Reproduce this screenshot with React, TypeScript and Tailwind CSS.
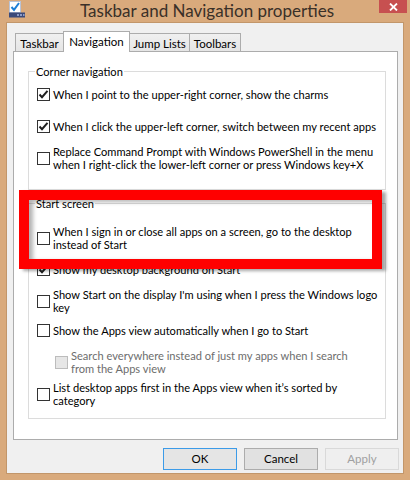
import React from "react";

const FONT = { fontFamily: 'Lato, "Noto Sans", sans-serif' };

function Check({ checked, disabled }: { checked?: boolean; disabled?: boolean }) {
  return (
    <span
      className={
        "flex h-[13px] w-[13px] shrink-0 items-center justify-center border " +
        (disabled ? "border-[#bcbcbc] bg-[#e6e6e6]" : "border-[#333333] bg-white")
      }
    >
      {checked && (
        <svg width="11" height="11" viewBox="0 0 11 11">
          <path d="M1.5 5.5 L4 8.2 L9.5 1.8" fill="none" stroke="#1f1f1f" strokeWidth="2" />
        </svg>
      )}
    </span>
  );
}

function Option({
  lines,
  checked,
  disabled,
  className,
}: {
  lines: string[];
  checked?: boolean;
  disabled?: boolean;
  className: string;
}) {
  return (
    <div className={"flex items-center gap-[3px] " + className}>
      <Check checked={checked} disabled={disabled} />
      <div className={"whitespace-nowrap text-[11.1px] leading-[13px] " + (disabled ? "text-[#6d6d6d]" : "text-black")}>
        {lines.map((l) => (
          <div key={l}>{l}</div>
        ))}
      </div>
    </div>
  );
}

function Tab({ label, active, className }: { label: string; active?: boolean; className: string }) {
  if (active) {
    return (
      <div
        className={
          "relative z-10 -mb-px -ml-px flex h-[21px] items-center justify-center border border-b-0 border-[#acacac] bg-white text-[11.5px] text-black " +
          className
        }
      >
        {label}
      </div>
    );
  }
  return (
    <div
      className={
        "-ml-px flex h-[18px] items-center justify-center border border-b-0 border-[#acacac] bg-gradient-to-b from-[#f0f0f0] to-[#e5e5e5] pt-[2px] text-[11.5px] text-black " +
        className
      }
    >
      {label}
    </div>
  );
}

export default function App() {
  return (
    <div className="relative h-[480px] w-[410px] overflow-hidden bg-[#d9aa7c]" style={FONT}>
      {/* title bar */}
      <div className="grid h-[22px] grid-cols-[80px_1fr_80px] items-start">
        <div className="pl-[9px] pt-[1px]">
          <svg width="17" height="17" viewBox="0 0 17 17">
            <rect x="0.5" y="0.5" width="11" height="11" fill="#ffffff" stroke="#b9c3d6" />
            <path d="M2.5 6 L5 8.8 L10 2" fill="none" stroke="#1e7fd6" strokeWidth="2" />
            <rect x="0" y="11.5" width="16" height="5" fill="#3b4a7a" />
            <rect x="8" y="13" width="2" height="2" fill="#8d9cc7" />
            <rect x="11" y="13" width="2" height="2" fill="#8d9cc7" />
            <rect x="14" y="13" width="1.5" height="2" fill="#8d9cc7" />
          </svg>
        </div>
        <div className="whitespace-nowrap pt-[1px] text-center text-[17px] leading-[20px] text-[#3a3028]">
          Taskbar and Navigation properties
        </div>
        <div className="flex justify-end pr-[7px]">
          <div className="flex h-[13px] w-[28px] items-center justify-center bg-[#c75050]">
            <svg width="9" height="8" viewBox="0 0 9 8">
              <path d="M1 0.5 L8 7.5 M8 0.5 L1 7.5" stroke="#ffffff" strokeWidth="1.8" />
            </svg>
          </div>
        </div>
      </div>

      {/* client area */}
      <div className="ml-[6px] h-[452px] w-[398px] border border-[#c2966a] bg-[#f0f0f0]">
        <div className="ml-[6px] pt-[8px]">
          <div className="flex items-end pl-[3px]">
            <Tab label="Taskbar" className="w-[49px]" />
            <Tab label="Navigation" active className="w-[67px]" />
            <Tab label="Jump Lists" className="w-[61px]" />
            <Tab label="Toolbars" className="w-[52px]" />
          </div>
          <div className="h-[389px] w-[385px] border border-[#acacac] bg-white">
            <fieldset className="ml-[14px] mt-[13px] w-[358px] min-w-0 border border-[#dcdcdc] px-[8px] pb-[18px]">
              <legend className="ml-[-2px] px-[1px] text-[11.1px] leading-[13px] text-black">Corner navigation</legend>
              <Option className="mt-[10px]" checked lines={["When I point to the upper-right corner, show the charms"]} />
              <Option className="mt-[19px]" checked lines={["When I click the upper-left corner, switch between my recent apps"]} />
              <Option
                className="mt-[12px]"
                lines={[
                  "Replace Command Prompt with Windows PowerShell in the menu",
                  "when I right-click the lower-left corner or press Windows key+X",
                ]}
              />
            </fieldset>
            <fieldset className="ml-[14px] mt-[7px] w-[358px] min-w-0 border border-[#dcdcdc] px-[8px] pb-[11px]">
              <legend className="ml-[-2px] px-[1px] text-[11.1px] leading-[13px] text-black">Start screen</legend>
              <Option
                className="mt-[15px]"
                lines={["When I sign in or close all apps on a screen, go to the desktop", "instead of Start"]}
              />
              <Option className="mt-[12px]" checked lines={["Show my desktop background on Start"]} />
              <Option
                className="mt-[12px]"
                lines={["Show Start on the display I'm using when I press the Windows logo", "key"]}
              />
              <Option className="mt-[10px]" lines={["Show the Apps view automatically when I go to Start"]} />
              <Option
                className="ml-[18px] mt-[12px]"
                disabled
                lines={["Search everywhere instead of just my apps when I search", "from the Apps view"]}
              />
              <Option
                className="mt-[6px]"
                lines={["List desktop apps first in the Apps view when it\u2019s sorted by", "category"]}
              />
            </fieldset>
          </div>
        </div>

        {/* buttons */}
        <div className="mt-[8px] flex justify-end gap-[7px] pr-[4px] text-[11.5px]">
          <button className="h-[22px] w-[74px] border border-[#3c9be8] bg-[#e5e5e5] text-black">OK</button>
          <button className="h-[22px] w-[74px] border border-[#acacac] bg-[#e1e1e1] text-black">Cancel</button>
          <button className="h-[22px] w-[74px] border border-[#d9d9d9] bg-[#efefef] text-[#a0a0a0]">Apply</button>
        </div>
      </div>

      {/* red annotation box */}
      <div className="absolute left-[19px] top-[190px] h-[79px] w-[363px] border-[10px] border-[#ff0000] shadow-[4px_2px_3px_rgba(0,0,0,0.35),inset_4px_2px_4px_rgba(0,0,0,0.3)]" />
    </div>
  );
}
